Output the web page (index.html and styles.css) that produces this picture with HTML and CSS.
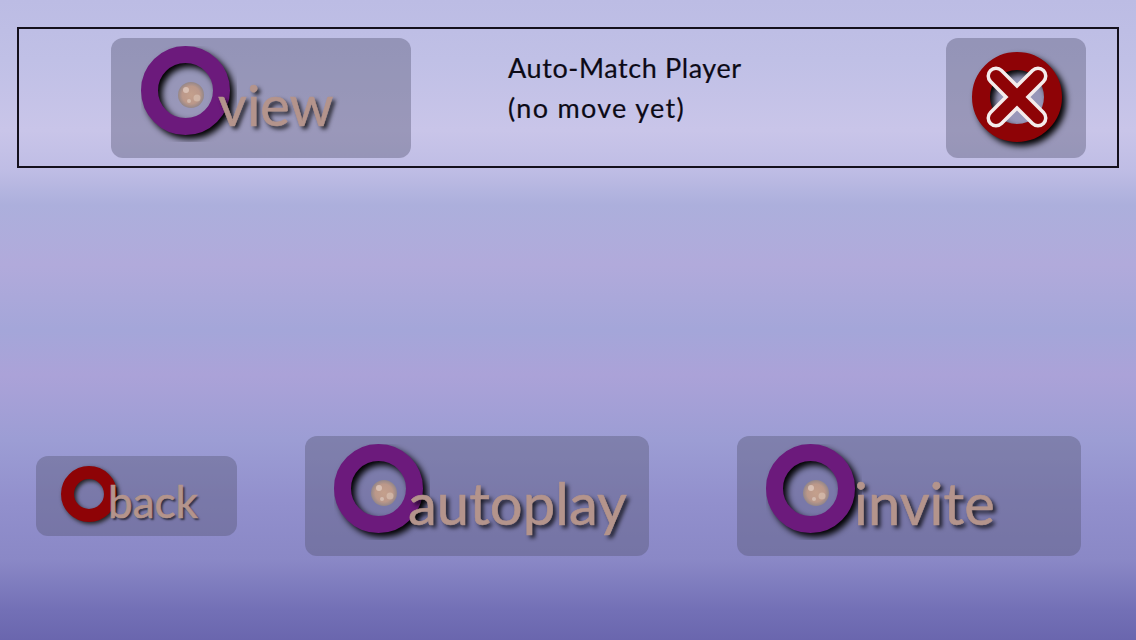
FILE: index.html
```html
<!doctype html>
<html>

<head>
  <title>Auto-Match</title>
  <link rel="stylesheet" href="styles.css">
</head>

<body>
  <svg class="defs" width="0" height="0">
    <defs>
      <radialGradient id="pearl" cx="50%" cy="50%" r="52%">
        <stop offset="0" stop-color="#c4a08c" />
        <stop offset="0.65" stop-color="#bb988a" />
        <stop offset="1" stop-color="#8f8488" />
      </radialGradient>
      <symbol id="ring-pearl" viewBox="0 0 96 96">
        <circle class="ring ring--purple" cx="44.500" cy="44.500" r="36" />
        <circle cx="50" cy="49" r="13" fill="url(#pearl)" />
        <circle cx="45" cy="44" r="3" fill="#e4cfc4" opacity="0.7" />
        <circle cx="56" cy="52" r="3.500" fill="#dcc6b8" opacity="0.6" />
        <circle cx="48" cy="55" r="2" fill="#e8dcd4" opacity="0.5" />
      </symbol>
    </defs>
  </svg>

  <section class="match">
    <a class="btn btn--view">
      <svg class="icon"><use href="#ring-pearl" /></svg>
      <span class="label">view</span>
    </a>
    <div class="lockup">
      <h1>Auto-Match Player</h1>
      <h2>(no move yet)</h2>
    </div>
    <a class="btn btn--close">
      <svg class="close-icon" viewBox="0 0 96 96">
        <circle class="ring ring--red" cx="45" cy="45" r="36" />
        <path class="cross cross--edge" d="M24 24 66 66M66 24 24 66" />
        <path class="cross cross--fill" d="M24 24 66 66M66 24 24 66" />
      </svg>
    </a>
  </section>

  <nav class="actions">
    <a class="btn btn--back">
      <svg class="back-icon" viewBox="0 0 60 60">
        <circle class="ring ring--red-small" cx="28" cy="28" r="21.500" />
      </svg>
      <span class="label label--small">back</span>
    </a>
    <a class="btn btn--wide">
      <svg class="icon"><use href="#ring-pearl" /></svg>
      <span class="label label--autoplay">autoplay</span>
    </a>
    <a class="btn btn--wide">
      <svg class="icon"><use href="#ring-pearl" /></svg>
      <span class="label label--invite">invite</span>
    </a>
  </nav>
</body>

</html>
```

FILE: styles.css
```css
* {
  box-sizing: border-box;
  margin: 0;
  padding: 0;
}

html,
body {
  width: 100%;
  height: 100%;
  overflow: hidden;
}

body {
  display: flex;
  flex-direction: column;
  justify-content: space-between;
  padding: 27px 17px 84px;
  font-family: Lato, "Open Sans", sans-serif;
  background: linear-gradient(to bottom,
      #bcbce4 0,
      #c0c0e6 60px,
      #c9c5e9 130px,
      #bfbde5 170px,
      #acafdc 205px,
      #b1aadb 265px,
      #a4a6d9 330px,
      #aba2d8 375px,
      #9c9dd4 440px,
      #9290cd 500px,
      #8a88c6 560px,
      #7370b6 610px,
      #6a66ae 640px);
}

.defs {
  position: absolute;
}

/** Top panel */
.match {
  display: flex;
  align-items: center;
  height: 141px;
  padding: 0 31px 0 92px;
  border: 2px solid #14101c;
}

.lockup {
  flex: 1;
  padding: 0 0 20px 97px;
  color: #0c0a16;
  font-size: 27px;
  line-height: 40px;
  letter-spacing: 0.6px;
  -webkit-text-stroke: 0.2px #0c0a16;
}

.lockup h1,
.lockup h2 {
  font-size: inherit;
  font-weight: normal;
}

.lockup h2 {
  letter-spacing: 1.3px;
}

/** Buttons */
.btn {
  display: flex;
  align-items: center;
  border-radius: 12px;
  background: rgba(85, 85, 115, 0.4);
}

.btn--view {
  width: 300px;
  height: 120px;
  padding-left: 30px;
}

.btn--close {
  width: 140px;
  height: 120px;
  padding-left: 26px;
}

.btn--back {
  width: 201px;
  height: 80px;
  padding-left: 25px;
}

.btn--wide {
  width: 344px;
  height: 120px;
  padding-left: 29px;
}

.icon {
  flex: none;
  width: 96px;
  height: 96px;
  margin-bottom: 8px;
}

.close-icon {
  width: 96px;
  height: 96px;
  margin-top: 5px;
  overflow: visible;
}

.back-icon {
  flex: none;
  width: 60px;
  height: 60px;
  overflow: visible;
}

/* rings */
.ring {
  fill: none;
  filter: drop-shadow(4px 4px 3px #000);
}

.ring--purple {
  stroke: #6c1a7c;
  stroke-width: 17px;
}

.ring--red {
  stroke: #8e0306;
  stroke-width: 18px;
}

.ring--red-small {
  stroke: #8e0306;
  stroke-width: 13px;
  filter: drop-shadow(2px 2px 2px #222);
}

.cross {
  fill: none;
  stroke-linecap: round;
}

.cross--edge {
  stroke: #f4ecec;
  stroke-width: 19px;
}

.cross--fill {
  stroke: #8e0306;
  stroke-width: 12px;
}

/* labels */
.label {
  margin: 14px 0 0 -19px;
  color: #b4948c;
  font-size: 56px;
  line-height: 1;
  -webkit-text-stroke: 0.6px #b4948c;
  text-shadow: 3px 3px 4px rgba(0, 0, 0, 0.8);
}

.label--small {
  margin: 10px 0 0 -13px;
  font-size: 44px;
  text-shadow: 2px 2px 2px rgba(0, 0, 0, 0.6);
}

.label--autoplay {
  margin-left: -22px;
  font-size: 58px;
}

.label--invite {
  margin-left: -8px;
  font-size: 58px;
}

/** Bottom row */
.actions {
  display: flex;
  align-items: center;
  gap: 68px;
  padding-left: 19px;
}

.actions .btn--wide:last-child {
  margin-left: 20px;
}
```
